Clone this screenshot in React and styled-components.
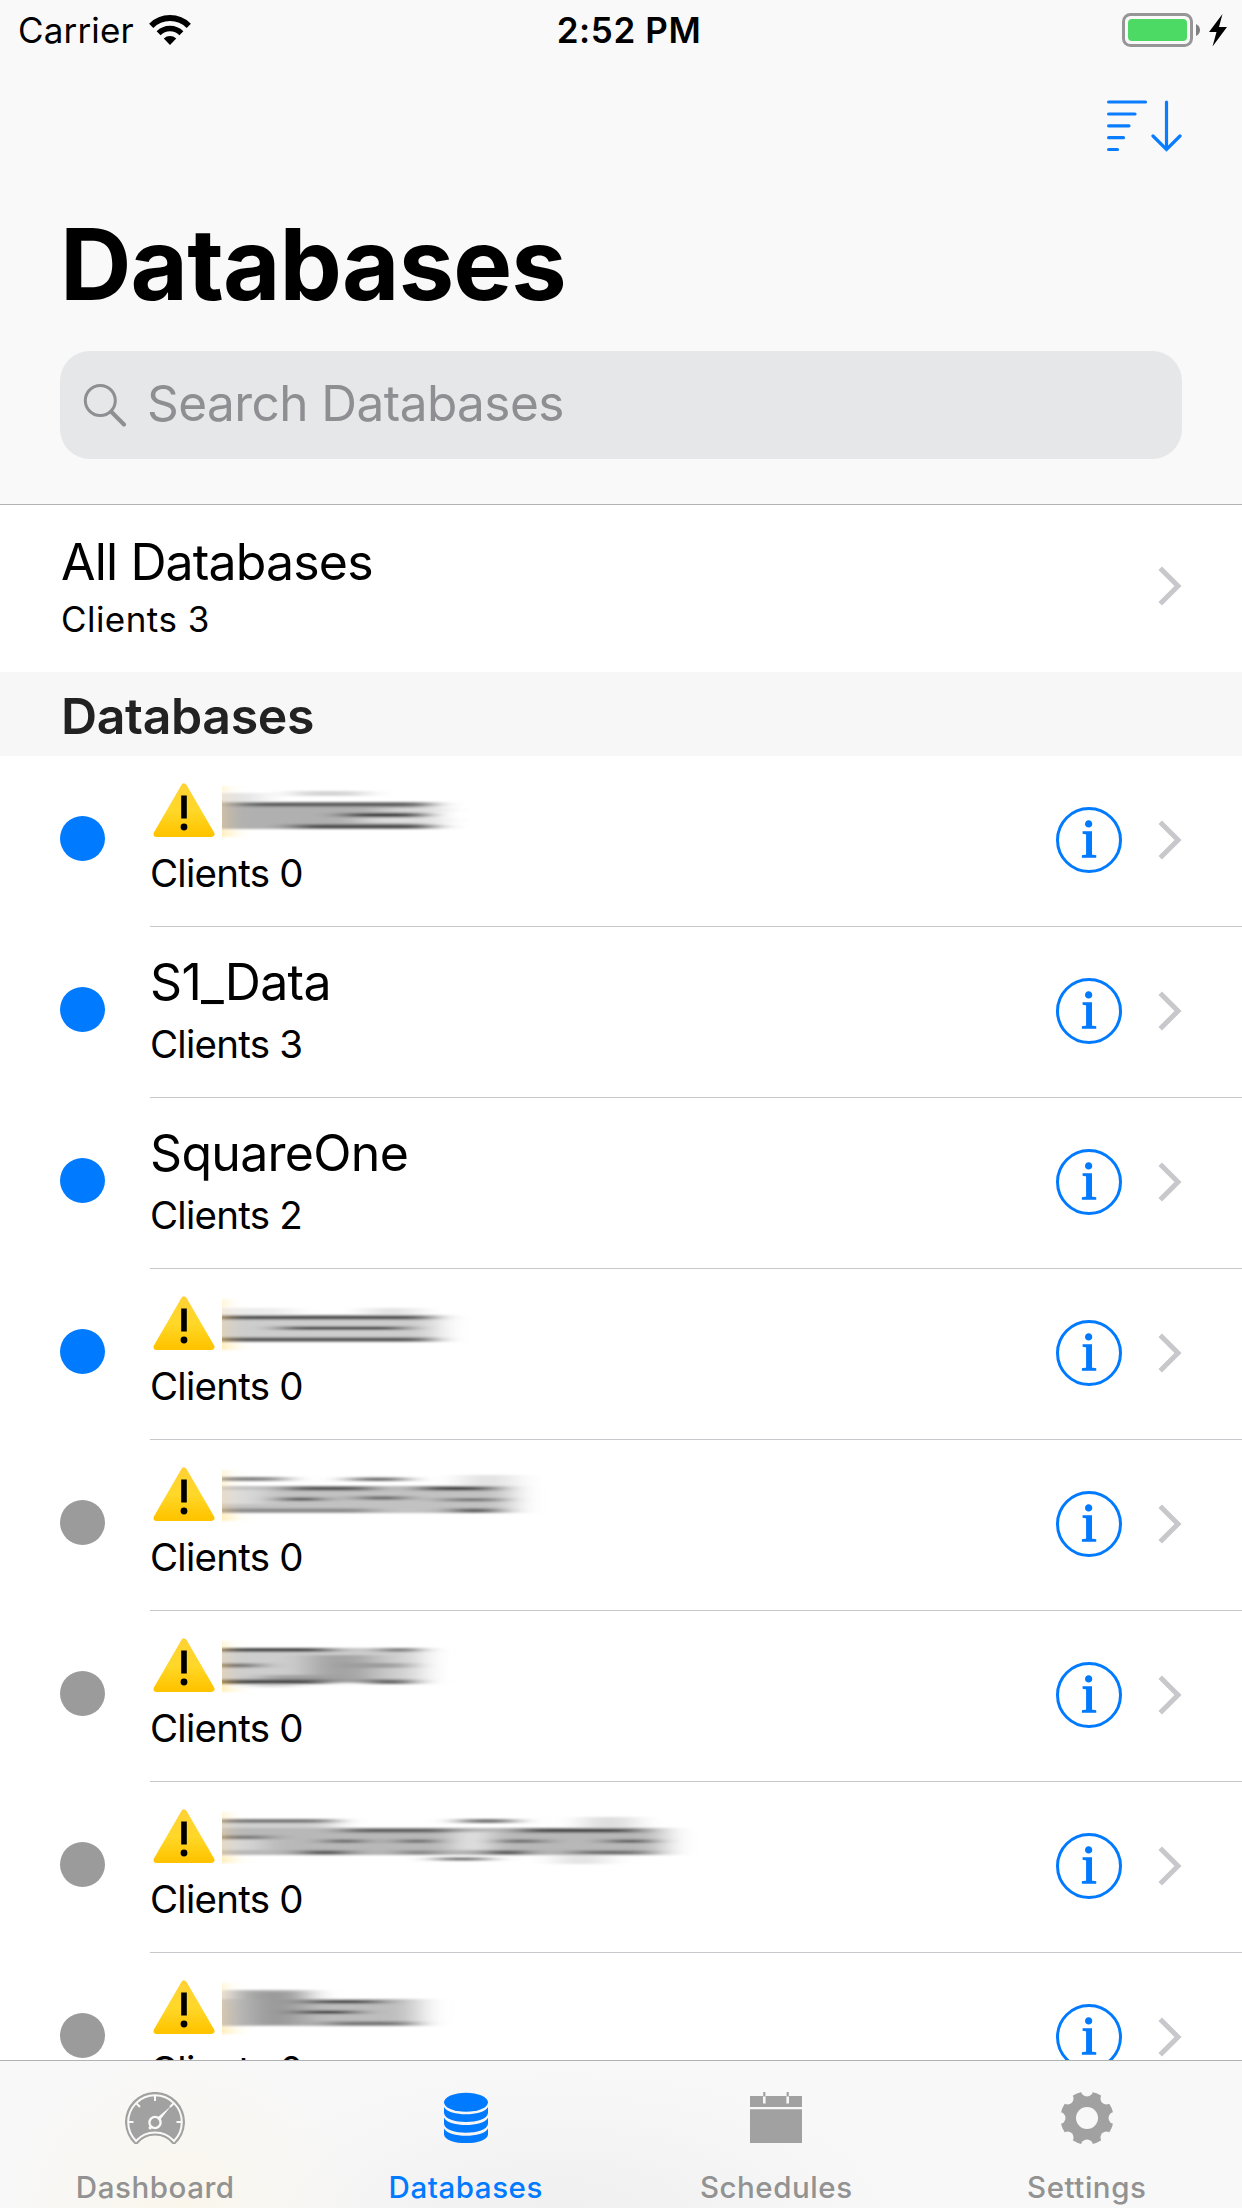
import React from 'react';
import styled, { createGlobalStyle } from 'styled-components';

const GlobalStyle = createGlobalStyle`
  * {
    box-sizing: border-box;
  }

  body {
    margin: 0;
    background: #fff;
    font-family: Inter, 'Liberation Sans', sans-serif;
    color: #000;
  }
`;

const Screen = styled.div`
  width: 1242px;
  height: 2208px;
  display: flex;
  flex-direction: column;
  overflow: hidden;
  background: #fff;
`;

const Header = styled.header`
  flex: none;
  background: #f9f9f9;
  border-bottom: 1px solid #b2b2b2;
  padding-bottom: 45px;
`;

const StatusBar = styled.div`
  height: 60px;
  padding: 0 15px 0 18px;
  display: grid;
  grid-template-columns: 1fr auto 1fr;
  align-items: center;
`;

const StatusSide = styled.div`
  display: flex;
  align-items: center;
  justify-content: ${({ $end }) => ($end ? 'flex-end' : 'flex-start')};
`;

const Carrier = styled.span`
  margin-right: 15px;
  font-size: 35px;
  line-height: 60px;
  letter-spacing: 0.15px;
`;

const Clock = styled.span`
  padding-left: 13px;
  font-size: 35px;
  font-weight: 600;
  line-height: 60px;
  letter-spacing: 0.6px;
`;

const NavRow = styled.div`
  height: 132px;
  padding: 0 60px 1px;
  display: flex;
  align-items: center;
  justify-content: flex-end;
`;

const Title = styled.h1`
  margin: 0;
  padding: 12px 60px 0;
  font-size: 99px;
  font-weight: 700;
  line-height: 120px;
  letter-spacing: -0.9px;
`;

const SearchBox = styled.div`
  height: 108px;
  margin: 27px 60px 0;
  padding-left: 23px;
  display: flex;
  align-items: center;
  border-radius: 30px;
  background: #e6e7e9;
`;

const SearchText = styled.span`
  margin-left: 20px;
  padding-bottom: 4px;
  font-size: 49.5px;
  line-height: 60px;
  letter-spacing: -0.55px;
  color: #8e8e93;
`;

const List = styled.main`
  flex: 1;
  min-height: 0;
  overflow: hidden;
`;

const AllRow = styled.div`
  height: 167px;
  padding: 27px 60px 0 61px;
  display: flex;
  justify-content: space-between;
`;

const AllTitle = styled.div`
  font-size: 50px;
  line-height: 60px;
  letter-spacing: -0.85px;
`;

const AllClients = styled.div`
  margin-top: 5px;
  font-size: 35px;
  line-height: 44px;
  letter-spacing: 0.45px;
`;

const AllChevron = styled.div`
  height: 108px;
  display: flex;
  align-items: center;
`;

const SectionTitle = styled.h2`
  height: 84px;
  margin: 0;
  padding: 4px 61px 0;
  font-size: 50px;
  font-weight: 600;
  line-height: 81px;
  letter-spacing: -0.35px;
  color: #222;
  background: #f7f7f7;
`;

const Row = styled.div`
  height: 171px;
  padding-left: 60px;
  display: flex;
`;

const Dot = styled.span`
  flex: none;
  width: 45px;
  height: 45px;
  margin: 60px 45px 0 0;
  border-radius: 50%;
  background: ${({ $online }) => ($online ? '#007aff' : '#9b9b9b')};
`;

const RowBody = styled.div`
  flex: 1;
  padding: 25px 60px 0 0;
  display: flex;
  justify-content: space-between;
  border-bottom: 1px solid #c8c7cc;
`;

const RowTitle = styled.div`
  height: 60px;
  display: flex;
  align-items: center;
  font-size: 50px;
  line-height: 60px;
  letter-spacing: -0.7px;
`;

const RowClients = styled.div`
  margin-top: 8px;
  font-size: 38.5px;
  line-height: 48px;
  letter-spacing: -0.75px;
`;

const Accessory = styled.div`
  height: 118px;
  display: flex;
  align-items: center;
  gap: 36px;
`;

const InfoButton = styled.span`
  width: 66px;
  height: 66px;
  border: 3px solid #007aff;
  border-radius: 50%;
  font-family: 'Liberation Serif', serif;
  font-size: 54px;
  line-height: 58px;
  text-align: center;
  color: #007aff;
  -webkit-text-stroke: 1.5px #007aff;
`;

const TabBar = styled.nav`
  flex: none;
  height: 148px;
  display: grid;
  grid-template-columns: repeat(4, 1fr);
  border-top: 1px solid #b2b2b2;
  background:
    radial-gradient(ellipse 170px 150px at 180px 148px, #faf6ec, transparent),
    radial-gradient(ellipse 330px 150px at 560px 160px, #efefef, transparent),
    #f8f8f8;
`;

const Tab = styled.div`
  padding-top: 31px;
  display: flex;
  flex-direction: column;
  align-items: center;
  color: ${({ $active }) => ($active ? '#007aff' : '#a1a1a1')};
`;

const TabLabel = styled.span`
  margin-top: 25px;
  font-size: 29.5px;
  font-weight: 500;
  line-height: 36px;
  letter-spacing: 0.55px;
  color: ${({ $active }) => ($active ? '#007aff' : '#929292')};
`;

const WifiIcon = () => (
  <svg width="42" height="30" viewBox="0 0 42 30" fill="none" stroke="#000">
    <path d="M2.2 10.8A26.6 26.6 0 0 1 39.8 10.8" strokeWidth="5.9" />
    <path d="M9.6 18.2A16.1 16.1 0 0 1 32.4 18.2" strokeWidth="5.6" />
    <path d="M21 30L14.8 23.4A9.2 9.2 0 0 1 27.2 23.4Z" fill="#000" stroke="none" />
  </svg>
);

const BatteryIcon = () => (
  <svg width="105" height="34" viewBox="0 0 105 34">
    <rect x="1.5" y="1.5" width="68" height="31" rx="7" fill="none" stroke="#969696" strokeWidth="3" />
    <rect x="6" y="6" width="59" height="22" rx="4" fill="#4cd964" />
    <path d="M74 11Q78 13 78 17T74 23Z" fill="#808080" />
    <path d="M100.5 1L87 19H94.5L90.5 33.5L105 14H97Z" fill="#000" />
  </svg>
);

const SortIcon = () => (
  <svg width="75" height="52" viewBox="0 0 75 52" fill="none" stroke="#0a7dff" strokeWidth="3.2" strokeLinecap="round">
    <path d="M1.6 2H38.5M1.6 14H28M1.6 25.8H22M1.6 37.7H16.5M1.6 49.5H10.5" />
    <path d="M59.5 2V49.5M46 36L59.5 49.5L73 36" />
  </svg>
);

const SearchIcon = () => (
  <svg width="44" height="44" viewBox="0 0 44 44" fill="none" stroke="#8e8e93" strokeLinecap="round">
    <circle cx="17.3" cy="17.5" r="15" strokeWidth="3" />
    <path d="M28.5 29L41 41.5" strokeWidth="4" />
  </svg>
);

const Chevron = () => (
  <svg width="24" height="40" viewBox="0 0 24 40" fill="none" stroke="#c7c7cc" strokeWidth="5">
    <path d="M2.2 2.2L20 20L2.2 37.8" />
  </svg>
);

const WarningWrap = styled.svg`
  flex: none;
  margin: 0 7px 0 3px;
`;

const WarningIcon = () => (
  <WarningWrap width="62" height="58" viewBox="0 0 62 58">
    <defs>
      <linearGradient id="warning" x1="0" y1="0" x2="0" y2="1">
        <stop offset="0" stopColor="#ffd233" />
        <stop offset="0.5" stopColor="#ffd829" />
        <stop offset="1" stopColor="#ffc400" />
      </linearGradient>
    </defs>
    <path
      d="M31 4.5L58.5 52H3.5Z"
      fill="url(#warning)"
      stroke="url(#warning)"
      strokeWidth="6"
      strokeLinejoin="round"
    />
    <path d="M31 13.5V36.5" stroke="#000" strokeWidth="5.6" />
    <circle cx="31" cy="45" r="3.4" fill="#000" />
  </WarningWrap>
);

// each streak is [x, y, width, height, colour]
const Smear = ({ width, streaks }) => (
  <svg width={width} height="60" viewBox={`0 1 ${width} 60`}>
    <defs>
      <filter id="smear" filterUnits="userSpaceOnUse" x="-80" y="0" width="640" height="62">
        <feGaussianBlur stdDeviation="15 0.8" />
      </filter>
    </defs>
    <g filter="url(#smear)">
      <path d="M-12 6L-2 57H-40V6Z" fill="#ffcb1f" opacity="0.7" />
      {streaks.map(([x, y, w, h, fill], i) => (
        <rect key={i} x={x === 0 ? -6 : x} y={y} width={x === 0 ? w + 6 : w} height={h} fill={fill} />
      ))}
    </g>
  </svg>
);

const DashboardIcon = () => (
  <svg width="60" height="52" viewBox="0 0 60 52" fill="currentColor">
    <path d="M10 52.3A30 30 0 1 1 50 52.3L47.5 52Q41 43.5 30 43.5T12.5 52Z" />
    <g fill="none" stroke="#f9f9f7" strokeWidth="2">
      <path d="M11 49A26.8 26.8 0 1 1 49 49Q41.5 40.5 30 40.5T11 49Z" />
      <path d="M30 3.5V9M3.5 30H8.5M56.5 30H51.5M11.3 11.3L15 15M48.7 11.3L45 15" />
      <circle cx="30" cy="30.5" r="5.6" strokeWidth="2.4" />
      <path d="M26 34.5L24.5 37" strokeWidth="3" />
    </g>
    <path d="M32.5 25.5L46 14L35 28Z" fill="#f9f9f7" />
  </svg>
);

const DatabaseIcon = () => (
  <svg width="44" height="52" viewBox="0 0 44 52" fill="currentColor">
    <ellipse cx="22" cy="10.3" rx="22" ry="9.5" />
    <path d="M0 15C5 24.7 39 24.7 44 15V21C43 33 1 33 0 21Z" />
    <path d="M0 25.7C5 35.4 39 35.4 44 25.7V31.7C43 43.7 1 43.7 0 31.7Z" />
    <path d="M0 36.4C5 46.1 39 46.1 44 36.4V42.4C43 54 1 54 0 42.4Z" />
  </svg>
);

const CalendarIcon = () => (
  <svg width="52" height="52" viewBox="0 0 52 52" fill="currentColor">
    <path d="M0 4H52V15H0ZM0 17.3H52V51H0Z" />
    <path d="M14.3 4V11.5M37.7 4V11.5" stroke="#f8f8f8" strokeWidth="2.6" />
    <path d="M14.3 0V4.5M37.7 0V4.5" stroke="currentColor" strokeWidth="2.2" />
  </svg>
);

const GearIcon = () => (
  <svg width="52" height="52" viewBox="0 0 52 52">
    <mask id="gear">
      <circle cx="26" cy="26" r="26.5" fill="#fff" />
      <circle cx="26" cy="26" r="11" fill="#000" />
      {[0, 45, 90, 135, 180, 225, 270, 315].map((angle) => (
        <circle key={angle} cx="26" cy="-1.5" r="6" fill="#000" transform={`rotate(${angle} 26 26)`} />
      ))}
    </mask>
    <rect width="52" height="52" fill="currentColor" mask="url(#gear)" />
  </svg>
);

const databases = [
  {
    clients: 0,
    online: true,
    width: 250,
    streaks: [
      [0, 13, 40, 9, '#e2e2e2'],
      [72, 11, 70, 5, '#d4d4d4'],
      [0, 22, 206, 27, '#b0b0b0'],
      [16, 22.5, 192, 4, '#5e5e5e'],
      [160, 28, 60, 4, '#d8d8d8'],
      [120, 33, 82, 4, '#444'],
      [140, 38, 80, 5, '#dedede'],
      [70, 44.5, 140, 4, '#4a4a4a'],
    ],
  },
  { name: 'S1_Data', clients: 3, online: true },
  { name: 'SquareOne', clients: 2, online: true },
  {
    clients: 0,
    online: true,
    width: 250,
    streaks: [
      [0, 15, 70, 7, '#ececec'],
      [145, 15, 50, 7, '#e2e2e2'],
      [0, 22, 215, 27, '#cdcdcd'],
      [0, 22.5, 210, 4, '#505050'],
      [56, 33.5, 130, 3.5, '#4a4a4a'],
      [0, 44.5, 210, 4, '#555'],
    ],
  },
  {
    clients: 0,
    online: false,
    width: 330,
    streaks: [
      [0, 13, 62, 4, '#858585'],
      [130, 13.5, 52, 3.5, '#666'],
      [240, 11, 52, 11, '#e2e2e2'],
      [0, 22, 290, 27, '#c2c2c2'],
      [0, 26, 40, 14, '#dcdcdc'],
      [62, 22.5, 90, 4, '#555'],
      [196, 22.5, 76, 4, '#444'],
      [58, 33.5, 42, 3.5, '#3c3c3c'],
      [136, 32, 48, 4, '#666'],
      [220, 34, 60, 3.5, '#777'],
      [0, 44.5, 150, 4, '#8a8a8a'],
      [230, 44.5, 44, 4, '#4a4a4a'],
    ],
  },
  {
    clients: 0,
    online: false,
    width: 240,
    streaks: [
      [0, 13, 198, 35, '#cecece'],
      [0, 13, 112, 4, '#505050'],
      [160, 13, 34, 4, '#606060'],
      [0, 28.5, 38, 4, '#666'],
      [86, 20, 66, 27, '#a4a4a4'],
      [120, 28, 68, 5, '#9c9c9c'],
      [40, 40, 80, 6, '#a0a0a0'],
      [0, 44.5, 106, 4.5, '#505050'],
      [146, 44.5, 44, 4.5, '#585858'],
      [28, 49, 46, 3, '#d4d4d4'],
    ],
  },
  {
    clients: 0,
    online: false,
    width: 480,
    streaks: [
      [0, 13, 112, 4, '#7c7c7c'],
      [240, 13, 50, 4, '#707070'],
      [362, 11, 50, 11, '#dcdcdc'],
      [0, 17, 112, 5, '#d0d0d0'],
      [0, 22, 442, 27, '#b8b8b8'],
      [0, 34, 40, 10, '#d8d8d8'],
      [236, 26, 28, 18, '#ececec'],
      [120, 22.5, 112, 4, '#606060'],
      [296, 22.5, 122, 4, '#484848'],
      [0, 29.5, 48, 3.5, '#757575'],
      [106, 33.5, 34, 3.5, '#484848'],
      [178, 33.5, 34, 3.5, '#505050'],
      [276, 33.5, 46, 3.5, '#666'],
      [386, 33.5, 44, 3.5, '#505050'],
      [78, 44.5, 50, 4, '#505050'],
      [180, 44.5, 34, 4, '#777'],
      [266, 44.5, 38, 4, '#333'],
      [350, 44.5, 76, 4, '#707070'],
      [216, 51.5, 48, 3, '#606060'],
      [335, 49, 48, 9, '#e2e2e2'],
    ],
  },
  {
    clients: 0,
    online: false,
    width: 240,
    streaks: [
      [8, 13, 78, 10, '#b0b0b0'],
      [0, 22, 196, 27, '#bdbdbd'],
      [28, 15, 54, 33, '#9a9a9a'],
      [86, 23, 74, 3.5, '#484848'],
      [78, 33.5, 58, 3.5, '#404040'],
      [104, 44.5, 88, 4, '#777'],
    ],
  },
];

const tabs = [
  { label: 'Dashboard', icon: DashboardIcon },
  { label: 'Databases', icon: DatabaseIcon, active: true },
  { label: 'Schedules', icon: CalendarIcon },
  { label: 'Settings', icon: GearIcon },
];

const App = () => {
  return (
    <>
      <GlobalStyle />
      <Screen>
        <Header>
          <StatusBar>
            <StatusSide>
              <Carrier>Carrier</Carrier>
              <WifiIcon />
            </StatusSide>
            <Clock>2:52 PM</Clock>
            <StatusSide $end>
              <BatteryIcon />
            </StatusSide>
          </StatusBar>
          <NavRow>
            <SortIcon />
          </NavRow>
          <Title>Databases</Title>
          <SearchBox>
            <SearchIcon />
            <SearchText>Search Databases</SearchText>
          </SearchBox>
        </Header>
        <List>
          <AllRow>
            <div>
              <AllTitle>All Databases</AllTitle>
              <AllClients>Clients 3</AllClients>
            </div>
            <AllChevron>
              <Chevron />
            </AllChevron>
          </AllRow>
          <SectionTitle>Databases</SectionTitle>
          {databases.map((db, index) => (
            <Row key={index}>
              <Dot $online={db.online} />
              <RowBody>
                <div>
                  <RowTitle>
                    {db.name || (
                      <>
                        <WarningIcon />
                        <Smear width={db.width} streaks={db.streaks} />
                      </>
                    )}
                  </RowTitle>
                  <RowClients>Clients {db.clients}</RowClients>
                </div>
                <Accessory>
                  <InfoButton>i</InfoButton>
                  <Chevron />
                </Accessory>
              </RowBody>
            </Row>
          ))}
        </List>
        <TabBar>
          {tabs.map(({ label, icon: Icon, active }) => (
            <Tab key={label} $active={active}>
              <Icon />
              <TabLabel $active={active}>{label}</TabLabel>
            </Tab>
          ))}
        </TabBar>
      </Screen>
    </>
  );
};

export default App;
